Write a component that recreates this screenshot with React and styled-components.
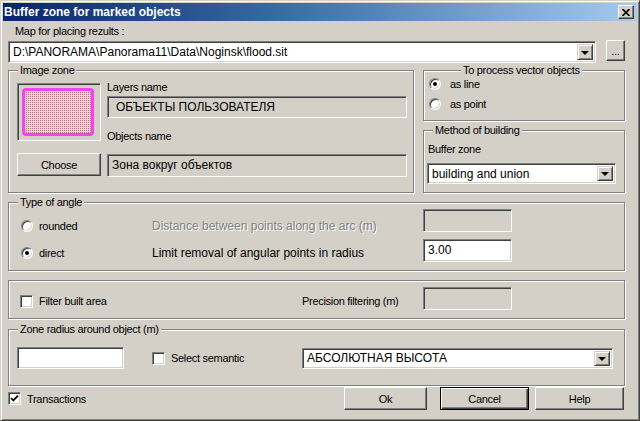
import React from "react";
import styled, { createGlobalStyle } from "styled-components";

const GlobalStyle = createGlobalStyle`
  html, body {
    margin: 0;
    padding: 0;
    background: #d4d0c8;
  }
  body {
    font-family: "Liberation Sans", Arial, sans-serif;
  }
`;

const Window = styled.div`
  width: 640px;
  height: 421px;
  box-sizing: border-box;
  background: #d4d0c8;
  border: 1px solid;
  border-color: #d4d0c8 #404040 #404040 #d4d0c8;
  box-shadow: inset 1px 1px #fff, inset -1px -1px #808080;
  padding: 2px 2px 0 2px;
  display: flex;
  flex-direction: column;
  overflow: hidden;
  font-size: 11px;
  letter-spacing: -0.3px;
  color: #000;
`;

const TitleBar = styled.div`
  height: 18px;
  flex: none;
  display: flex;
  align-items: center;
  background: linear-gradient(to right, #0a246a 0%, #3a6ea5 45%, #a6caf0 100%);
  color: #fff;
  font-weight: bold;
  font-size: 12px;
  letter-spacing: 0;
  padding-left: 1px;
`;

const TitleText = styled.span`
  flex: 1;
`;

const CloseBox = styled.div`
  width: 16px;
  height: 14px;
  box-sizing: border-box;
  margin-right: 3px;
  background: #d4d0c8;
  border: 1px solid;
  border-color: #fff #404040 #404040 #fff;
  box-shadow: inset -1px -1px #808080;
  display: flex;
  align-items: center;
  justify-content: center;
`;

const Body = styled.div`
  display: flex;
  flex-direction: column;
  padding: 0 12px 0 5px;
`;

const Label = styled.div`
  line-height: 14px;
  white-space: nowrap;
  margin-top: ${(p) => p.$mt || 0}px;
  padding-left: ${(p) => p.$pl || 0}px;
`;

const ArialLabel = styled.div`
  font-size: 12px;
  letter-spacing: 0;
  line-height: 14px;
  white-space: nowrap;
  margin-top: ${(p) => p.$mt || 0}px;
  color: ${(p) => (p.$disabled ? "#808080" : "#000")};
  text-shadow: ${(p) => (p.$disabled ? "1px 1px 0 #fff" : "none")};
`;

const Row = styled.div`
  display: flex;
  align-items: flex-start;
  gap: ${(p) => p.$gap || 0}px;
  margin-top: ${(p) => p.$mt || 0}px;
`;

const Sunken = styled.div`
  box-sizing: border-box;
  width: ${(p) => p.$w}px;
  height: ${(p) => p.$h}px;
  flex: none;
  border: 1px solid;
  border-color: #808080 #fff #fff #808080;
  box-shadow: inset 1px 1px #404040, inset -1px -1px #d4d0c8;
  background: ${(p) => (p.$white ? "#fff" : "#d4d0c8")};
  font-size: 12px;
  letter-spacing: 0;
  line-height: 14px;
  padding: ${(p) => p.$pad || "0 0 0 4px"};
  display: flex;
  align-items: ${(p) => (p.$top ? "flex-start" : "center")};
  white-space: nowrap;
  overflow: hidden;
`;

const ComboBox = styled(Sunken)`
  padding: 0 2px 0 4px;
  justify-content: space-between;
  margin-left: ${(p) => p.$ml || 0}px;
`;

const DropButton = styled.div`
  width: 16px;
  align-self: stretch;
  margin: 2px 0;
  box-sizing: border-box;
  background: #d4d0c8;
  border: 1px solid;
  border-color: #d4d0c8 #404040 #404040 #d4d0c8;
  box-shadow: inset 1px 1px #fff, inset -1px -1px #808080;
  display: flex;
  align-items: center;
  justify-content: center;
  flex: none;
`;

const Arrow = styled.span`
  width: 0;
  height: 0;
  border-left: 4px solid transparent;
  border-right: 4px solid transparent;
  border-top: 4px solid #000;
  margin-top: 1px;
`;

const Button = styled.div`
  box-sizing: border-box;
  width: ${(p) => p.$w}px;
  height: ${(p) => p.$h || 23}px;
  margin-top: ${(p) => p.$mt || 0}px;
  flex: none;
  background: #d4d0c8;
  border: 1px solid;
  border-color: ${(p) =>
    p.$default ? "#000" : "#fff #404040 #404040 #fff"};
  box-shadow: ${(p) =>
    p.$default
      ? "inset 1px 1px #fff, inset -1px -1px #404040, inset -2px -2px #808080"
      : "inset -1px -1px #808080"};
  display: flex;
  align-items: center;
  justify-content: center;
  line-height: 14px;
`;

const Group = styled.div`
  position: relative;
  box-sizing: border-box;
  height: ${(p) => p.$h}px;
  width: ${(p) => (p.$w ? `${p.$w}px` : "auto")};
  flex: none;
  margin-top: ${(p) => p.$mt || 0}px;
  border: 1px solid #808080;
  box-shadow: 1px 1px 0 #fff, inset 1px 1px 0 #fff;
  padding: ${(p) => p.$pad || 0};
`;

const Legend = styled.span`
  position: absolute;
  top: -7px;
  left: ${(p) => p.$left ?? 9}px;
  padding: 0 2px;
  background: #d4d0c8;
  line-height: 12px;
  white-space: nowrap;
`;

const Column = styled.div`
  display: flex;
  flex-direction: column;
  width: ${(p) => p.$w}px;
  padding-top: ${(p) => p.$pt || 0}px;
  gap: ${(p) => p.$gap || 0}px;
`;

const SwatchFrame = styled.div`
  box-sizing: border-box;
  width: 84px;
  height: 58px;
  border: 1px solid;
  border-color: #808080 #fff #fff #808080;
  box-shadow: inset 1px 1px #404040, inset -1px -1px #d4d0c8;
  padding: 4px 0 0 4px;
`;

const Option = styled.div`
  display: flex;
  align-items: center;
  gap: ${(p) => p.$gap || 6}px;
  height: ${(p) => p.$h || 14}px;
  margin-top: ${(p) => p.$mt || 0}px;
  white-space: nowrap;
`;

const RadioMark = styled.span`
  position: relative;
  width: 12px;
  height: 12px;
  flex: none;
  box-sizing: border-box;
  border-radius: 50%;
  background: #fff;
  border: 1px solid;
  border-color: #808080 #fff #fff #808080;
  box-shadow: inset 1px 1px #404040, inset -1px -1px #d4d0c8;

  &::after {
    content: "";
    display: ${(p) => (p.$checked ? "block" : "none")};
    position: absolute;
    left: 3px;
    top: 3px;
    width: 4px;
    height: 4px;
    border-radius: 50%;
    background: #000;
  }
`;

const CheckMark = styled.span`
  width: 13px;
  height: 13px;
  flex: none;
  box-sizing: border-box;
  background: #fff;
  border: 1px solid;
  border-color: #808080 #fff #fff #808080;
  box-shadow: inset 1px 1px #404040, inset -1px -1px #d4d0c8;
  display: flex;
  align-items: center;
  justify-content: center;
`;

const AngleGrid = styled.div`
  display: grid;
  grid-template-columns: 131px 271px 89px;
  grid-template-rows: 23px 23px;
  row-gap: 7px;
  align-items: start;
`;

const FilterGrid = styled.div`
  display: grid;
  grid-template-columns: 282px 121px 89px;
  grid-template-rows: 23px;
  align-items: start;
`;

const ZoneGrid = styled.div`
  display: grid;
  grid-template-columns: 135px 150px 311px;
  align-items: center;
`;

const BottomRow = styled.div`
  display: flex;
  align-items: center;
  height: 23px;
  margin-top: 1px;
`;

const ButtonBar = styled.div`
  display: flex;
  gap: 6px;
  margin-left: auto;
  margin-right: 1px;

  & > :first-child {
    margin-right: 7px;
  }
`;

const Radio = ({ checked, children, mt, h }) => (
  <Option $mt={mt} $h={h} $gap={children && typeof children === "string" && mt === undefined ? 9 : 6}>
    <RadioMark $checked={checked} />
    {children}
  </Option>
);

const Check = ({ checked, children, mt }) => (
  <Option $mt={mt}>
    <CheckMark>
      {checked && (
        <svg width="9" height="9" viewBox="0 0 9 9">
          <path d="M1 4 L3.3 6.4 L8 1.6" stroke="#000" strokeWidth="1.8" fill="none" />
        </svg>
      )}
    </CheckMark>
    {children}
  </Option>
);

const Combo = ({ w, h, ml, children }) => (
  <ComboBox $w={w} $h={h} $ml={ml} $white>
    <span>{children}</span>
    <DropButton>
      <Arrow />
    </DropButton>
  </ComboBox>
);

const Swatch = () => (
  <svg width="72" height="48" viewBox="0 0 72 48">
    <defs>
      <pattern id="dots" width="2" height="2" patternUnits="userSpaceOnUse">
        <rect width="2" height="2" fill="#f6d2d8" />
        <rect width="1" height="1" fill="#b9707e" />
      </pattern>
    </defs>
    <rect x="1.5" y="1.5" width="69" height="45" rx="2.5" fill="url(#dots)" stroke="#f244ee" strokeWidth="3" />
  </svg>
);

export default function App() {
  return (
    <>
      <GlobalStyle />
      <Window>
        <TitleBar>
          <TitleText>Buffer zone for marked objects</TitleText>
          <CloseBox>
            <svg width="8" height="7" viewBox="0 0 8 7">
              <path d="M0.5 0 L7.5 7 M7.5 0 L0.5 7" stroke="#000" strokeWidth="1.6" />
            </svg>
          </CloseBox>
        </TitleBar>
        <Body>
          <Label $mt={3} $pl={7}>Map for placing rezults :</Label>
          <Row $mt={3} $gap={10}>
            <Combo w={588} h={22}>D:\PANORAMA\Panorama11\Data\Noginsk\flood.sit</Combo>
            <Button $w={19} $h={21} $mt={-1}>...</Button>
          </Row>

          <Row $mt={7} $gap={9}>
            <Group $w={406} $h={123} $pad="0 0 0 8px">
              <Legend>Image zone</Legend>
              <Row $gap={6}>
                <Column $w={84} $pt={12} $gap={12}>
                  <SwatchFrame>
                    <Swatch />
                  </SwatchFrame>
                  <Button $w={84}>Choose</Button>
                </Column>
                <Column $w={300}>
                  <Label $mt={9}>Layers name</Label>
                  <Row $mt={2}>
                    <Sunken $w={300} $h={22} $pad="0 0 0 8px">ОБЪЕКТЫ ПОЛЬЗОВАТЕЛЯ</Sunken>
                  </Row>
                  <Label $mt={11}>Objects name</Label>
                  <Row $mt={11}>
                    <Sunken $w={300} $h={23} $pad="3px 0 0 4px" $top>Зона вокруг объектов</Sunken>
                  </Row>
                </Column>
              </Row>
            </Group>

            <Column $w={202} $gap={9}>
              <Group $h={51} $pad="3px 0 0 5px">
                <Legend $left={37}>To process vector objects</Legend>
                <Option $h={20} $gap={9}>
                  <RadioMark $checked />
                  as line
                </Option>
                <Option $h={20} $gap={9}>
                  <RadioMark />
                  as point
                </Option>
              </Group>
              <Group $h={63} $pad="11px 0 0 4px">
                <Legend>Method of building</Legend>
                <Label>Buffer zone</Label>
                <Row $mt={7}>
                  <Combo w={189} h={21} ml={-1}>building and union</Combo>
                </Row>
              </Group>
            </Column>
          </Row>

          <Group $mt={9} $h={69} $pad="6px 0 0 12px">
            <Legend>Type of angle</Legend>
            <AngleGrid>
              <Option $mt={10}>
                <RadioMark />
                rounded
              </Option>
              <ArialLabel $mt={10} $disabled>Distance between points along the arc (m)</ArialLabel>
              <Sunken $w={89} $h={23} />
              <Option $mt={7}>
                <RadioMark $checked />
                direct
              </Option>
              <ArialLabel $mt={7}>Limit removal of angular points in radius</ArialLabel>
              <Sunken $w={89} $h={23} $white $pad="0 0 2px 4px">3.00</Sunken>
            </AngleGrid>
          </Group>

          <Group $mt={9} $h={39} $pad="6px 0 0 11px">
            <FilterGrid>
              <Check mt={7}>Filter built area</Check>
              <Label $mt={7}>Precision filtering (m)</Label>
              <Sunken $w={89} $h={23} />
            </FilterGrid>
          </Group>

          <Group $mt={10} $h={57} $pad="17px 0 0 8px">
            <Legend>Zone radius around object (m)</Legend>
            <ZoneGrid>
              <Sunken $w={107} $h={22} $white />
              <Check>Select semantic</Check>
              <Combo w={311} h={21}>АБСОЛЮТНАЯ ВЫСОТА</Combo>
            </ZoneGrid>
          </Group>

          <BottomRow>
            <Check checked>Transactions</Check>
            <ButtonBar>
              <Button $w={83}>Ok</Button>
              <Button $w={89} $default>Cancel</Button>
              <Button $w={89}>Help</Button>
            </ButtonBar>
          </BottomRow>
        </Body>
      </Window>
    </>
  );
}
